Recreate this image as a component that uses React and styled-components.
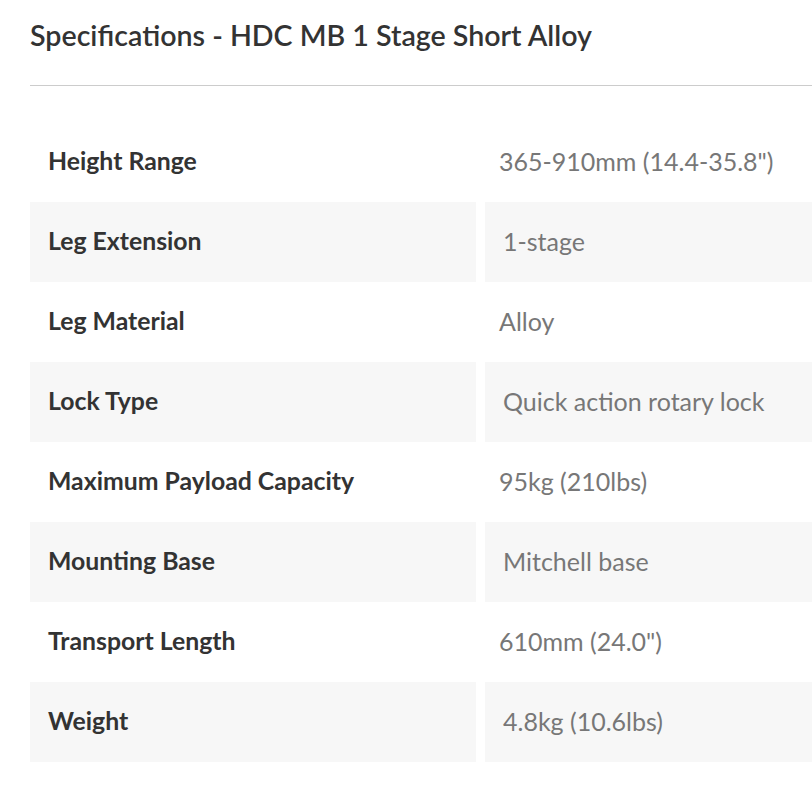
import styled, { createGlobalStyle } from 'styled-components'

const Global = createGlobalStyle`
  html, body {
    margin: 0;
    padding: 0;
    background: #fff;
    overflow: hidden;
  }
  body {
    font-family: Lato, "Open Sans", sans-serif;
  }
`

const Page = styled.div`
  width: 812px;
  height: 812px;
  overflow: hidden;
  padding-left: 30px;
  box-sizing: border-box;
`

const Title = styled.h2`
  margin: 0;
  padding-top: 17px;
  height: 85px;
  box-sizing: border-box;
  font-size: 28.6px;
  font-weight: 600;
  color: #333;
  line-height: 36px;
  white-space: nowrap;
`

const Rule = styled.hr`
  margin: 0;
  border: 0;
  border-top: 1px solid #ccc;
  width: 900px;
`

const Table = styled.div`
  margin-top: 36px;
  width: 901px;
`

const Row = styled.div`
  display: grid;
  grid-template-columns: 446px 446px;
  column-gap: 9px;
  height: 80px;
`

const Label = styled.div`
  display: flex;
  align-items: center;
  padding: 0 0 3px 18px;
  background: ${p => (p.$shaded ? '#f7f7f7' : '#fff')};
  font-size: 24.8px;
  font-weight: 700;
  color: #333;
  white-space: nowrap;
`

const Value = styled.div`
  display: flex;
  align-items: center;
  padding: 0 0 3px ${p => (p.$shaded ? '18px' : '14px')};
  background: ${p => (p.$shaded ? '#f7f7f7' : '#fff')};
  font-size: 25px;
  color: #777;
  white-space: nowrap;
`

const specs = [
  ['Height Range', '365-910mm (14.4-35.8")'],
  ['Leg Extension', '1-stage'],
  ['Leg Material', 'Alloy'],
  ['Lock Type', 'Quick action rotary lock'],
  ['Maximum Payload Capacity', '95kg (210lbs)'],
  ['Mounting Base', 'Mitchell base'],
  ['Transport Length', '610mm (24.0")'],
  ['Weight', '4.8kg (10.6lbs)'],
]

export default function App() {
  return (
    <>
      <Global />
      <Page>
        <Title>Specifications - HDC MB 1 Stage Short Alloy</Title>
        <Rule />
        <Table>
          {specs.map(([k, v], i) => (
            <Row key={k}>
              <Label $shaded={i % 2 === 1}>{k}</Label>
              <Value $shaded={i % 2 === 1}>{v}</Value>
            </Row>
          ))}
        </Table>
      </Page>
    </>
  )
}
